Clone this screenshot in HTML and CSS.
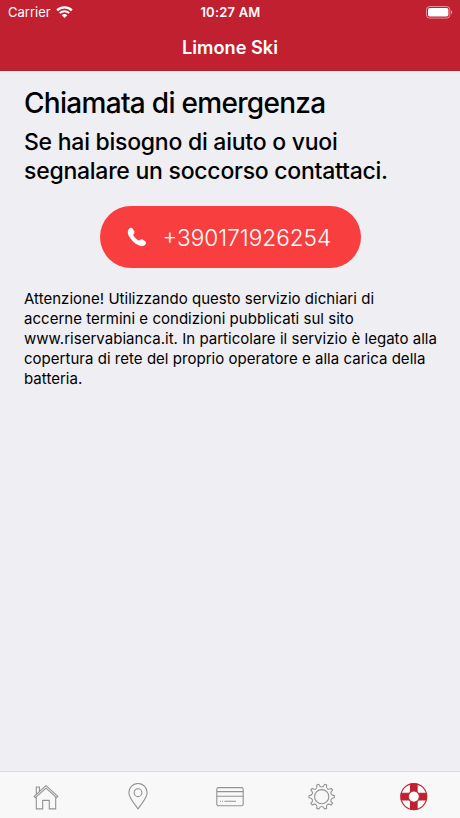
FILE: index.html
```html
<!DOCTYPE html>
<html lang="it">
<head>
    <meta charset="UTF-8">
    <meta name="viewport" content="width=device-width, initial-scale=1.0">
    <title>Limone Ski</title>
    <link rel="stylesheet" href="styles.css">
</head>
<body>
    <header class="header">
        <div class="status-bar">
            <div class="carrier">
                <span>Carrier</span>
                <svg width="17" height="12" viewBox="0 0 17 12" fill="none" stroke="#fff">
                    <path d="M1.1 4.4C5.2.4 11.8.4 15.9 4.4" stroke-width="2.3"/>
                    <path d="M3.8 7.1c2.6-2.5 6.8-2.5 9.4 0" stroke-width="2.1"/>
                    <path d="M8.5 12 5.7 9.2c1.6-1.5 4-1.5 5.6 0z" fill="#fff" stroke="none"/>
                </svg>
            </div>
            <div class="time">10:27 AM</div>
            <div class="battery">
                <svg width="27" height="13" viewBox="0 0 27 13">
                    <rect x=".5" y=".5" width="23.4" height="11.6" rx="3.2" fill="none" stroke="#fff" stroke-opacity=".5"/>
                    <rect x="2" y="2" width="20.4" height="8.6" rx="1.8" fill="#fff"/>
                    <path d="M25 4.3c1.8.7 1.8 3.3 0 4z" fill="#fff" fill-opacity=".5"/>
                </svg>
            </div>
        </div>
        <div class="title">Limone Ski</div>
    </header>

    <main class="content">
        <h1>Chiamata di emergenza</h1>
        <h2>Se hai bisogno di aiuto o vuoi<br>segnalare un soccorso contattaci.</h2>
        <a class="call-button" href="tel:+390171926254">
            <svg width="20" height="20" viewBox="0 0 20 20" fill="#fff">
                <path d="M2.3 1.4C3.6.2 5 .6 5.9 2l1.2 2c.7 1.2.4 2.1-.4 2.9-.6.6-.5 1.1-.1 1.8 1.2 1.9 2.6 3.3 4.6 4.6.7.4 1.2.4 1.8-.2.8-.8 1.7-1 2.8-.3l2.1 1.3c1.4.9 1.5 2.3.4 3.5-1.8 1.9-4.3 2-7.2.5C7.4 16.2 3.8 12.6 1.7 8.7.3 6 .4 3.2 2.3 1.4z"/>
            </svg>
            <span>+390171926254</span>
        </a>
        <p class="notice">Attenzione! Utilizzando questo servizio dichiari di<br>accerne termini e condizioni pubblicati sul sito<br>www.riservabianca.it. In particolare il servizio è legato alla<br>copertura di rete del proprio operatore e alla carica della<br>batteria.</p>
    </main>

    <nav class="tab-bar">
        <a class="tab" href="#">
            <svg width="28" height="28" viewBox="0 0 28 28">
                <path d="M2.2 13.4 14 2.6 25.8 13.4 24.6 14.6 14 5.2 3.4 14.600zM4.3 14V25.900H10.700V17.400H17.300V25.900H23.700V14M4.300 11.400V4H7.500V8.500"/>
            </svg>
        </a>
        <a class="tab" href="#">
            <svg width="28" height="28" viewBox="0 0 28 28">
                <path d="M14 26C11 21 4.9 15.6 4.9 9.6a9.1 9.1 0 0 1 18.2 0C23.1 15.6 17 21 14 26z"/>
                <circle cx="14" cy="9.7" r="3.9"/>
            </svg>
        </a>
        <a class="tab" href="#">
            <svg width="28" height="28" viewBox="0 0 28 28">
                <rect x=".8" y="4.6" width="26.4" height="18.2" rx="1.8"/>
                <path d="M.8 8.6H27.2M.8 13.2H27.2M4 18.3H5M6 18.3H7M8.4 18.3H20"/>
            </svg>
        </a>
        <a class="tab" href="#">
            <svg width="28" height="28" viewBox="0 0 28 28">
                <path id="gear"/>
                <circle cx="13.7" cy="13.7" r="7.1"/>
            </svg>
        </a>
        <a class="tab active" href="#">
            <svg width="28" height="28" viewBox="0 0 28 28">
                <circle class="ring" cx="13.8" cy="13.6" r="13"/>
                <path class="bands" d="M10.5 1.1H17.1V10H10.500zM10.500 17.500H17.100V26.100H10.500zM1.200 10.300H10V16.900H1.200zM17.500 10.300H26.400V16.900H17.500z"/>
                <circle class="hole" cx="13.8" cy="13.6" r="5.6"/>
            </svg>
        </a>
    </nav>

    <script>
        // Ten flared teeth, evenly spaced around the gear
        const points = [];
        const point = (radius, angle) => {
            const a = angle * Math.PI / 180;
            return (13.7 + radius * Math.sin(a)).toFixed(2) + ' ' + (13.7 - radius * Math.cos(a)).toFixed(2);
        };
        for (let i = 0; i < 10; i++) {
            const a = i * 36 + 18;
            points.push((i ? 'L' : 'M') + point(12.7, a - 5));
            points.push('L' + point(12.7, a + 5));
            points.push('C' + point(9, a + 8) + ' ' + point(9, a + 28) + ' ' + point(12.7, a + 31));
        }
        document.getElementById('gear').setAttribute('d', points.join('') + 'Z');
    </script>
</body>
</html>
```
FILE: styles.css
```css
* {
    box-sizing: border-box;
}
body {
    font-family: Inter, 'Liberation Sans', sans-serif;
    background-color: #efeef3;
    color: #000;
    margin: 0;
    display: flex;
    flex-direction: column;
    height: 100vh;
    overflow: hidden;
}
.header {
    height: 71px;
    background-color: #c02030;
    border-bottom: 1px solid #b51e2d;
    color: #fff;
}
.status-bar {
    display: grid;
    grid-template-columns: 1fr auto 1fr;
    align-items: center;
    height: 24px;
    padding: 0 7px 0 8px;
    font-size: 13px;
}
.carrier {
    display: flex;
    align-items: center;
    gap: 5px;
}
.time {
    font-weight: 600;
    letter-spacing: 0.2px;
}
.battery {
    display: flex;
    justify-content: flex-end;
}
.title {
    padding-top: 11px;
    text-align: center;
    font-size: 18.2px;
    line-height: 24px;
    font-weight: 600;
}
.content {
    flex: 1;
    display: flex;
    flex-direction: column;
    padding: 15px 24px 0;
    white-space: nowrap;
}
h1 {
    margin: 0;
    font-size: 28px;
    line-height: 34px;
    font-weight: 500;
    letter-spacing: -0.7px;
}
h2 {
    margin: 8px 0 0;
    font-size: 23px;
    line-height: 29px;
    font-weight: 500;
    letter-spacing: -0.25px;
}
.call-button {
    display: flex;
    align-items: center;
    align-self: center;
    gap: 16px;
    width: 261px;
    height: 62px;
    margin-top: 20px;
    padding-left: 27px;
    border-radius: 31px;
    background-color: #f83e3e;
    color: #fff;
    font-size: 22.6px;
    font-weight: 300;
    text-decoration: none;
}
.notice {
    margin: 21px 0 0;
    font-size: 15px;
    line-height: 20px;
    letter-spacing: 0.03px;
}
.tab-bar {
    display: grid;
    grid-template-columns: repeat(5, 1fr);
    height: 47px;
    padding-top: 11px;
    background-color: #f8f8f8;
    border-top: 1px solid #dcdcde;
}
.tab {
    display: flex;
    justify-content: center;
}
.tab svg {
    fill: none;
    stroke: #929292;
    stroke-width: 1.1;
    stroke-linejoin: round;
}
.active svg {
    stroke: #c02030;
}
.active .ring,
.active .hole {
    fill: #fff;
}
.active .bands {
    fill: #c02030;
}
```
